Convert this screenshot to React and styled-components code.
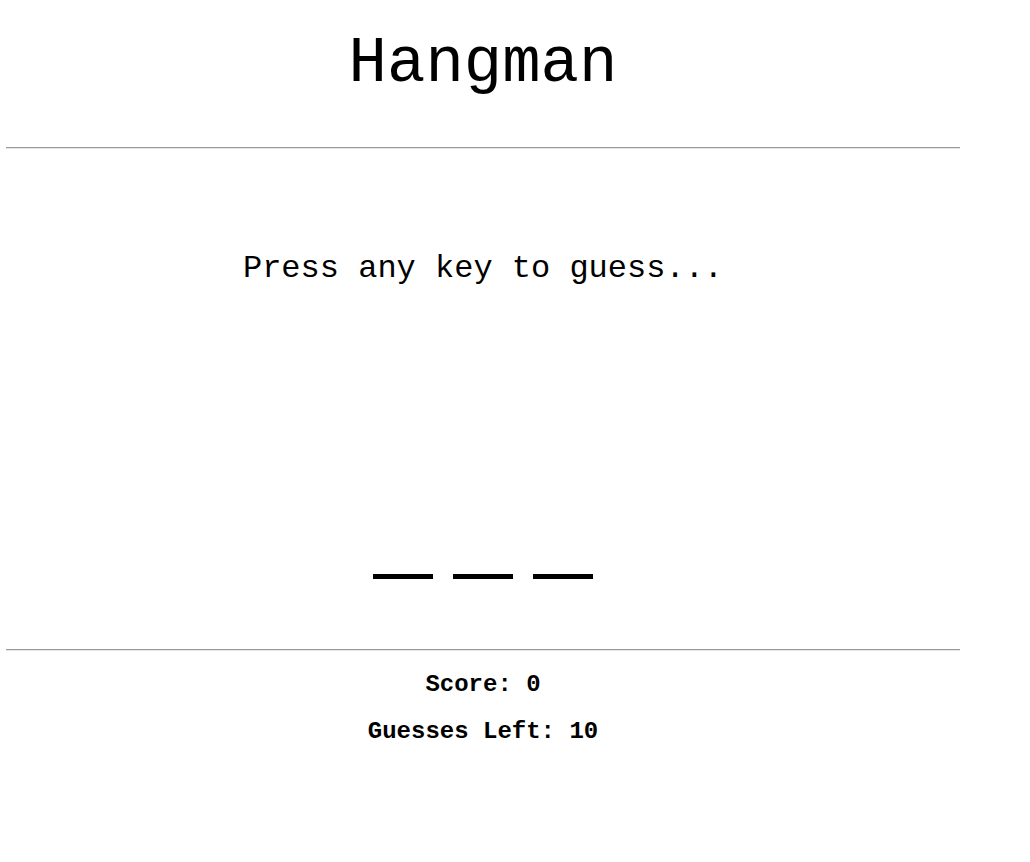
import React from "react";
import styled, { createGlobalStyle } from "styled-components";

const Global = createGlobalStyle`
  html, body { margin: 0; padding: 0; background: #fff; }
  body { font-family: "Liberation Mono", "Courier New", monospace; color: #000; }
`;

const Page = styled.div`
  width: 954px;
  margin-left: 6px;
  display: flex;
  flex-direction: column;
`;

const Title = styled.h1`
  margin: 28px 0 47px;
  font-size: 64px;
  line-height: 72px;
  font-weight: normal;
  text-align: center;
`;

const Rule = styled.hr`
  margin: 0;
  border: none;
  height: 0;
  border-top: 1px solid #9a9a9a;
  border-bottom: 1px solid #e6e6e6;
`;

const Board = styled.section`
  display: flex;
  flex-direction: column;
  align-items: center;
  padding-top: 102px;
  height: 500px;
  box-sizing: border-box;
`;

const Prompt = styled.p`
  margin: 0;
  font-size: 32px;
  line-height: 36px;
  text-align: center;
`;

const Word = styled.div`
  display: flex;
  gap: 20px;
  margin-top: 287px;
`;

const Slot = styled.span`
  width: 60px;
  height: 5px;
  background: #000;
`;

const Stats = styled.div`
  display: flex;
  flex-direction: column;
  align-items: center;
  gap: 19px;
  padding-top: 20px;
`;

const Stat = styled.div`
  font-size: 24px;
  line-height: 28px;
  font-weight: bold;
`;

export default function App() {
  const letters = ["", "", ""];
  return (
    <>
      <Global />
      <Page>
        <Title>Hangman</Title>
        <Rule />
        <Board>
          <Prompt>Press any key to guess...</Prompt>
          <Word>
            {letters.map((l, i) => (
              <Slot key={i} />
            ))}
          </Word>
        </Board>
        <Rule />
        <Stats>
          <Stat>Score: 0</Stat>
          <Stat>Guesses Left: 10</Stat>
        </Stats>
      </Page>
    </>
  );
}
